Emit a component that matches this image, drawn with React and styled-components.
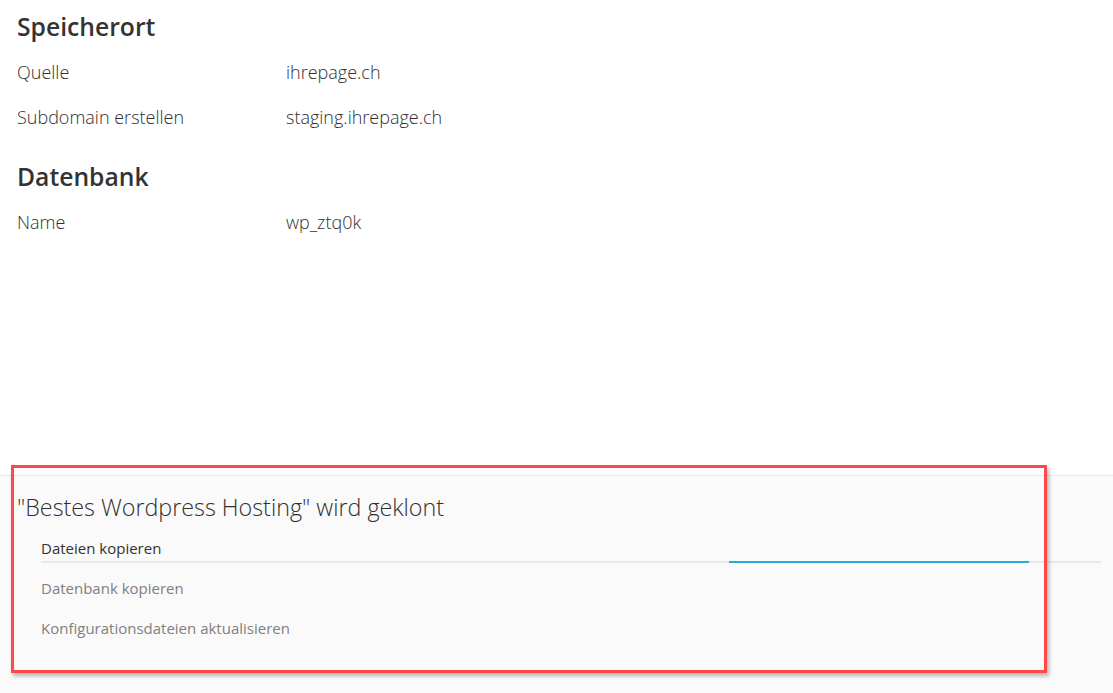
import React from "react";
import styled, { createGlobalStyle } from "styled-components";

const GlobalStyle = createGlobalStyle`
  html, body {
    margin: 0;
    padding: 0;
    background: #fff;
  }
  body {
    font-family: "Open Sans", "Liberation Sans", sans-serif;
    color: #333;
  }
`;

const Page = styled.div`
  display: flex;
  flex-direction: column;
  min-height: 100vh;
`;

const Details = styled.div`
  display: flex;
  flex-direction: column;
  gap: 22px;
  padding: 11px 17px 0;
`;

const Section = styled.section`
  display: flex;
  flex-direction: column;
`;

const SectionTitle = styled.h2`
  margin: 0 0 6px;
  font-size: 24.7px;
  line-height: 32px;
  font-weight: 600;
  color: #333;
`;

const Row = styled.div`
  display: grid;
  grid-template-columns: 269px 1fr;
  height: 45px;
  align-items: center;
  font-size: 18px;
  line-height: 24px;
  font-weight: 300;
  color: #2f2f2f;
`;

const Panel = styled.div`
  position: relative;
  margin-top: auto;
  height: 218px;
  box-sizing: border-box;
  background: #fafafa;
  border-top: 1px solid #e8e8e8;
  padding: 15px 12px 0 17px;
`;

const PanelTitle = styled.h3`
  margin: 0 0 15px;
  font-size: 23.3px;
  line-height: 32px;
  font-weight: 300;
  color: #2f2f2f;
`;

const Steps = styled.ul`
  list-style: none;
  margin: 0;
  padding: 0 0 0 24px;
`;

const Step = styled.li`
  display: flex;
  justify-content: space-between;
  align-items: flex-end;
  font-size: 15px;
  line-height: 20px;
  color: ${(p) => (p.$active ? "#333" : "#808080")};
  padding-bottom: ${(p) => (p.$active ? "3px" : "0")};
  border-bottom: ${(p) => (p.$active ? "2px solid #e8e8e8" : "none")};
  margin-bottom: ${(p) => (p.$active ? "-5px" : "0")};

  & + & {
    margin-top: 20px;
  }
`;

const Progress = styled.div`
  width: 300px;
  height: 2px;
  margin: 0 72px -5px 0;
  background: #27a8de;
`;

const Highlight = styled.div`
  position: absolute;
  left: 11px;
  top: -11px;
  width: 1036px;
  height: 208px;
  box-sizing: border-box;
  border: 3px solid #ff4848;
  box-shadow: 2px 3px 4px rgba(0, 0, 0, 0.28);
  pointer-events: none;
`;

const info = [
  {
    title: "Speicherort",
    rows: [
      ["Quelle", "ihrepage.ch"],
      ["Subdomain erstellen", "staging.ihrepage.ch"],
    ],
  },
  {
    title: "Datenbank",
    rows: [["Name", "wp_ztq0k"]],
  },
];

const steps = ["Dateien kopieren", "Datenbank kopieren", "Konfigurationsdateien aktualisieren"];

const App = () => {
  return (
    <>
      <GlobalStyle />
      <Page>
        <Details>
          {info.map((section) => (
            <Section key={section.title}>
              <SectionTitle>{section.title}</SectionTitle>
              {section.rows.map(([label, value]) => (
                <Row key={label}>
                  <span>{label}</span>
                  <span>{value}</span>
                </Row>
              ))}
            </Section>
          ))}
        </Details>

        <Panel>
          <PanelTitle>"Bestes Wordpress Hosting" wird geklont</PanelTitle>
          <Steps>
            {steps.map((step, i) => (
              <Step key={step} $active={i === 0}>
                <span>{step}</span>
                {i === 0 ? <Progress /> : null}
              </Step>
            ))}
          </Steps>
          <Highlight />
        </Panel>
      </Page>
    </>
  );
};

export default App;
